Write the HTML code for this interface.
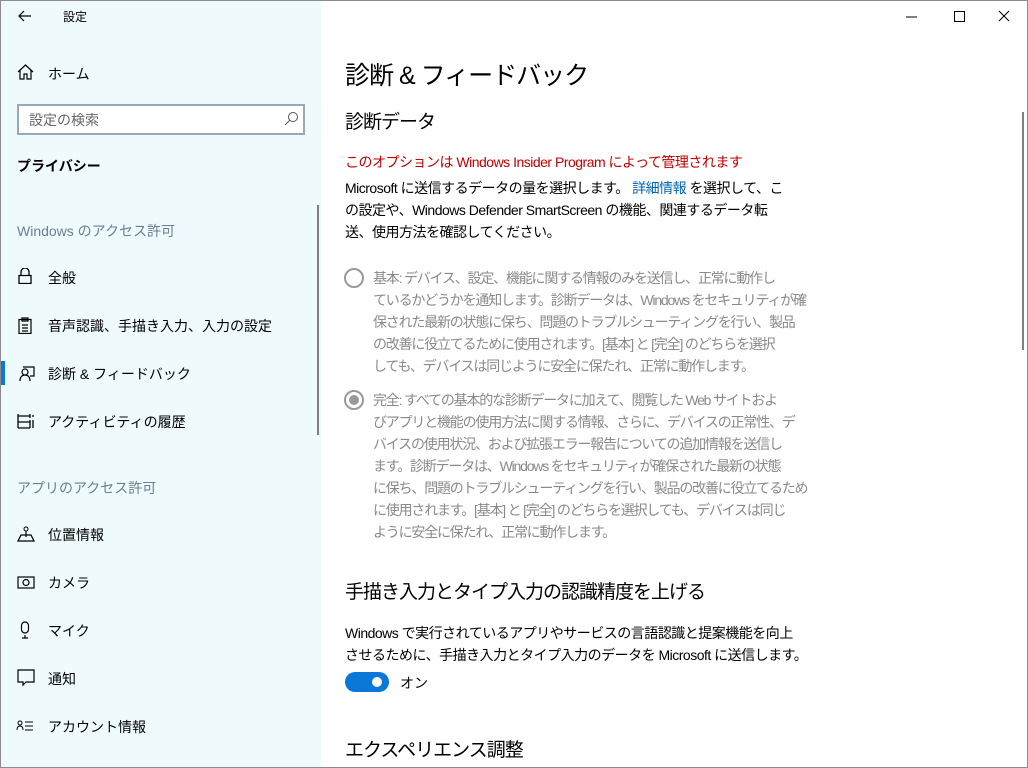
<!DOCTYPE html>
<html><head><meta charset="utf-8"><style>
*{margin:0;padding:0;box-sizing:border-box}
body{width:1028px;height:768px;overflow:hidden;background:#fff;font-family:"Liberation Sans","Noto Sans CJK JP",sans-serif;color:#000;position:relative}
.frame{position:absolute;left:0;top:0;width:1028px;height:768px;border:1px solid #8c8c8c;pointer-events:none;z-index:10}
.side{position:absolute;left:1px;top:1px;width:320px;height:766px;background:#effafd}
.a{position:absolute;white-space:nowrap}
.nav{font-size:14px;left:48px}
.ic{position:absolute;left:16px}
.t{font-size:14px;line-height:22px;left:345px;letter-spacing:-0.5px}
.g{color:#8a8a8a;letter-spacing:-1.2px}
.h{font-size:19px;letter-spacing:-1px}
</style></head><body>
<div class="side"></div>
<div class="frame"></div>
<svg class="a" style="left:17px;top:9px" width="16" height="14"><path d="M14 7H2M7 2L2 7l5 5" fill="none" stroke="#000" stroke-width="1.2"/></svg>
<div class="a" style="left:63px;top:8px;font-size:12px">設定</div>
<svg class="a" style="left:906px;top:10px" width="110" height="14"><path d="M0 7h11" stroke="#000"/><rect x="48.5" y="1.5" width="10" height="10" fill="none" stroke="#000"/><path d="M93 1l10 10M103 1L93 11" stroke="#000"/></svg>
<svg class="ic" style="top:64px;left:17px" width="18" height="16"><path d="M1 8L8.5 1 16 8M3 6v9h4v-5h3v5h4V6" fill="none" stroke="#000" stroke-width="1.2"/></svg>
<div class="a nav" style="top:64px">ホーム</div>
<div class="a" style="left:17px;top:104px;width:288px;height:31px;border:2px solid #99a8b8;background:#fff"></div>
<div class="a" style="left:29px;top:110px;font-size:14px;color:#666">設定の検索</div>
<svg class="a" style="left:283px;top:111px" width="16" height="16"><circle cx="10" cy="6" r="4.5" fill="none" stroke="#555"/><path d="M7 9l-5 5" stroke="#555"/></svg>
<div class="a" style="left:17px;top:156px;font-size:14px;font-weight:bold">プライバシー</div>
<div class="a" style="left:17px;top:221px;font-size:14px;color:#6b7f94">Windows のアクセス許可</div>
<svg class="ic" style="top:268px;left:18px" width="14" height="16"><path d="M3 7V4a4 4 0 0 1 8 0v3M1 7.5h12v8H1z" fill="none" stroke="#000" stroke-width="1.3"/></svg>
<div class="a nav" style="top:268px">全般</div>
<svg class="ic" style="top:317px;left:18px" width="14" height="17"><path d="M1 2.5h12v14H1zM4 1h6v3H4zM4 8h6M4 11h6M4 14h6" fill="none" stroke="#000" stroke-width="1.2"/></svg>
<div class="a nav" style="top:316px">音声認識、手描き入力、入力の設定</div>
<div class="a" style="left:1px;top:361px;width:4px;height:24px;background:#0a78d7"></div>
<svg class="ic" style="top:364px;left:17px" width="18" height="18"><path d="M6 3h11v9h-4M3 17c0-4 2-6 5-6s5 2 5 6" fill="none" stroke="#000" stroke-width="1.2"/><circle cx="8" cy="8" r="3" fill="#effafd" stroke="#000" stroke-width="1.2"/></svg>
<div class="a nav" style="top:364px">診断 &amp; フィードバック</div>
<svg class="ic" style="top:412px;left:17px" width="18" height="18"><path d="M1 2v14M1 4h12M1 10h12M1 16h12M13 2v4M13 8v8M16 3v2M16 8v8" fill="none" stroke="#000" stroke-width="1.3"/></svg>
<div class="a nav" style="top:412px">アクティビティの履歴</div>
<div class="a" style="left:317px;top:205px;width:2px;height:230px;background:#808080"></div>
<div class="a" style="left:17px;top:478px;font-size:14px;color:#6b7f94">アプリのアクセス許可</div>
<svg class="ic" style="top:526px;left:17px" width="18" height="16"><circle cx="9" cy="3" r="2" fill="none" stroke="#000"/><path d="M9 5v6M1 15l3-6h10l3 6z" fill="none" stroke="#000" stroke-width="1.2"/></svg>
<div class="a nav" style="top:525px">位置情報</div>
<svg class="ic" style="top:575px;left:17px" width="18" height="14"><rect x="1" y="2" width="16" height="11" fill="none" stroke="#000" stroke-width="1.2"/><circle cx="9" cy="7.5" r="3" fill="none" stroke="#000" stroke-width="1.2"/></svg>
<div class="a nav" style="top:573px">カメラ</div>
<svg class="ic" style="top:621px;left:19px" width="12" height="18"><rect x="2.5" y="1" width="7" height="11" rx="3.5" fill="none" stroke="#000" stroke-width="1.2"/><path d="M6 14v3M3 17h6" stroke="#000" stroke-width="1.2"/></svg>
<div class="a nav" style="top:621px">マイク</div>
<svg class="ic" style="top:669px;left:17px" width="18" height="18"><path d="M1 1h16v12H9l-3 3v-3H1z" fill="none" stroke="#000" stroke-width="1.2"/></svg>
<div class="a nav" style="top:669px">通知</div>
<svg class="ic" style="top:720px;left:16px" width="18" height="12"><circle cx="4" cy="3" r="2" fill="none" stroke="#000"/><path d="M1 10c0-3 1.5-4 3-4s3 1 3 4M9 2h8M9 6h8M9 10h8" fill="none" stroke="#000"/></svg>
<div class="a nav" style="top:717px">アカウント情報</div>
<div class="a" style="left:345px;top:56px;font-size:25px;letter-spacing:-1px">診断 &amp; フィードバック</div>
<div class="a h" style="left:345px;top:107px">診断データ</div>
<div class="a t" style="top:151px;color:#c00000">このオプションは Windows Insider Program によって管理されます</div>
<div class="a t" style="top:177px">Microsoft に送信するデータの量を選択します。 <span style="color:#0063b1">詳細情報</span> を選択して、こ</div>
<div class="a t" style="top:199px">の設定や、Windows Defender SmartScreen の機能、関連するデータ転</div>
<div class="a t" style="top:221px">送、使用方法を確認してください。</div>
<div class="a" style="left:344px;top:268px;width:20px;height:20px;border:2px solid #999;border-radius:50%"></div>
<div class="a t g" style="left:373px;top:267px">基本: デバイス、設定、機能に関する情報のみを送信し、正常に動作し</div>
<div class="a t g" style="left:373px;top:289px">ているかどうかを通知します。診断データは、Windows をセキュリティが確</div>
<div class="a t g" style="left:373px;top:311px">保された最新の状態に保ち、問題のトラブルシューティングを行い、製品</div>
<div class="a t g" style="left:373px;top:333px">の改善に役立てるために使用されます。[基本] と [完全] のどちらを選択</div>
<div class="a t g" style="left:373px;top:355px">しても、デバイスは同じように安全に保たれ、正常に動作します。</div>
<div class="a" style="left:344px;top:390px;width:20px;height:20px;border:2px solid #999;border-radius:50%"><div style="margin:3px;width:10px;height:10px;border-radius:50%;background:#999"></div></div>
<div class="a t g" style="left:373px;top:389px">完全: すべての基本的な診断データに加えて、閲覧した Web サイトおよ</div>
<div class="a t g" style="left:373px;top:411px">びアプリと機能の使用方法に関する情報、さらに、デバイスの正常性、デ</div>
<div class="a t g" style="left:373px;top:433px">バイスの使用状況、および拡張エラー報告についての追加情報を送信し</div>
<div class="a t g" style="left:373px;top:455px">ます。診断データは、Windows をセキュリティが確保された最新の状態</div>
<div class="a t g" style="left:373px;top:477px">に保ち、問題のトラブルシューティングを行い、製品の改善に役立てるため</div>
<div class="a t g" style="left:373px;top:499px">に使用されます。[基本] と [完全] のどちらを選択しても、デバイスは同じ</div>
<div class="a t g" style="left:373px;top:521px">ように安全に保たれ、正常に動作します。</div>
<div class="a h" style="left:345px;top:577px">手描き入力とタイプ入力の認識精度を上げる</div>
<div class="a t" style="top:622px">Windows で実行されているアプリやサービスの言語認識と提案機能を向上</div>
<div class="a t" style="top:644px">させるために、手描き入力とタイプ入力のデータを Microsoft に送信します。</div>
<div class="a" style="left:345px;top:672px;width:44px;height:20px;border-radius:10px;background:#0a78d7"><div style="position:absolute;left:27px;top:5px;width:10px;height:10px;border-radius:50%;background:#fff"></div></div>
<div class="a" style="left:400px;top:673px;font-size:14px">オン</div>
<div class="a h" style="left:345px;top:735px">エクスペリエンス調整</div>
<div class="a" style="left:1022px;top:112px;width:2px;height:238px;background:#808080"></div>
</body></html>
